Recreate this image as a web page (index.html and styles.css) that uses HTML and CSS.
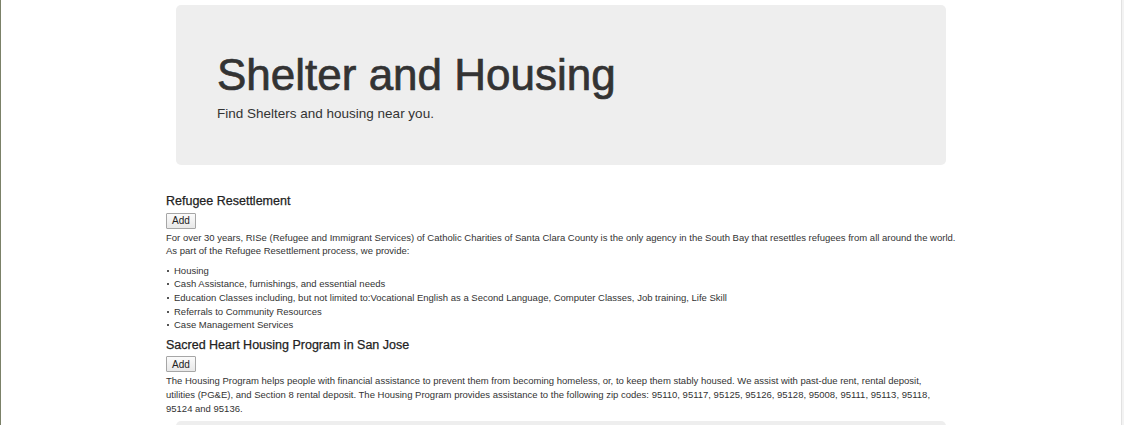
FILE: index.html
```html
<!DOCTYPE html>
<html lang="en">
<head>
    <meta charset="UTF-8">
    <meta name="viewport" content="width=device-width, initial-scale=1.0">
    <title>Shelter and Housing</title>
    <link rel="stylesheet" href="styles.css">
</head>
<body>
    <div class="container">
        <div class="jumbotron">
            <h1>Shelter and Housing</h1>
            <p class="lead">Find Shelters and housing near you.</p>
        </div>

        <div class="resource">
            <h4>Refugee Resettlement</h4>
            <div class="actions"><button class="btn-add">Add</button></div>
            <p>For over 30 years, RISe (Refugee and Immigrant Services) of Catholic Charities of Santa Clara County is the only agency in the South Bay that resettles refugees from all around the world.<br>
            As part of the Refugee Resettlement process, we provide:</p>
            <ul>
                <li>Housing</li>
                <li>Cash Assistance, furnishings, and essential needs</li>
                <li>Education Classes including, but not limited to:Vocational English as a Second Language, Computer Classes, Job training, Life Skill</li>
                <li>Referrals to Community Resources</li>
                <li>Case Management Services</li>
            </ul>
        </div>

        <div class="resource">
            <h4>Sacred Heart Housing Program in San Jose</h4>
            <div class="actions"><button class="btn-add">Add</button></div>
            <p>The Housing Program helps people with financial assistance to prevent them from becoming homeless, or, to keep them stably housed. We assist with past-due rent, rental deposit,<br>
            utilities (PG&amp;E), and Section 8 rental deposit. The Housing Program provides assistance to the following zip codes: 95110, 95117, 95125, 95126, 95128, 95008, 95111, 95113, 95118,<br>
            95124 and 95136.</p>
        </div>

        <div class="jumbotron jumbotron-next"></div>
    </div>
</body>
</html>
```

FILE: styles.css
```css
html {
    background-color: #f3f3f3;
}
body {
    font-family: "Liberation Sans", Arial, sans-serif;
    font-size: 9.5px;
    line-height: 1.42857;
    color: #333;
    margin: 0;
    width: 1120px;
    min-height: 425px;
    background-color: #fff;
    border-left: 1px solid #7b8168;
    border-right: 1px solid #e2e2e2;
    overflow: hidden;
}
.container {
    width: 790px;
    margin: 0 auto;
}
.jumbotron {
    margin: 5px 10px 30px;
    padding: 46px 41px 38px;
    height: 76px;
    background-color: #eee;
    border-radius: 5px;
}
.jumbotron h1 {
    margin: 0;
    font-size: 44px;
    font-weight: normal;
    line-height: 1.1;
    color: #333;
    -webkit-text-stroke: 0.7px #333;
}
.jumbotron .lead {
    margin: 5px 0 0;
    font-size: 13.5px;
}
.jumbotron-next {
    margin-top: 0;
    height: 40px;
}
.resource h4 {
    margin: 6px 0 4px;
    font-size: 12.5px;
    font-weight: normal;
    line-height: 1.1;
    color: #222;
    -webkit-text-stroke: 0.25px #222;
}
.actions {
    height: 18px;
}
.btn-add {
    height: 16px;
    padding: 0 5px;
    font-family: "Liberation Sans", Arial, sans-serif;
    font-size: 10px;
    color: #222;
    background: linear-gradient(#fbfbfb, #e8e8e8);
    border: 1px solid #a6a6a6;
    border-radius: 1px;
}
.resource p {
    margin: 0 0 6px;
}
.resource ul {
    margin: 0 0 7px;
    padding: 0;
    list-style: none;
}
.resource li {
    position: relative;
    padding-left: 8px;
}
.resource li::before {
    content: "";
    position: absolute;
    left: 1px;
    top: 6px;
    width: 2px;
    height: 2px;
    background-color: #555;
}
```
